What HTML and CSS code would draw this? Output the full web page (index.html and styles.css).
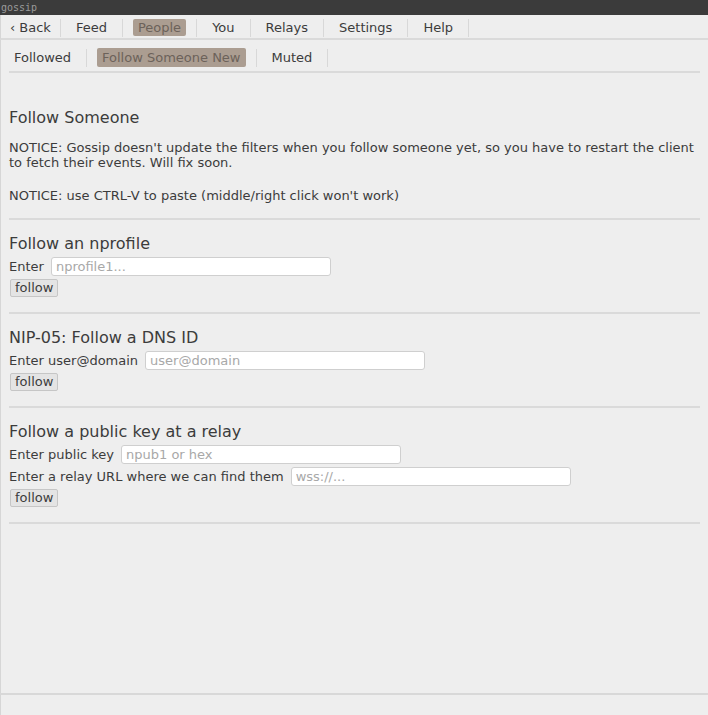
FILE: index.html
```html
<!DOCTYPE html>
<html>
<head>
<meta charset="utf-8">
<link rel="stylesheet" href="styles.css">
</head>
<body>
<div class="app">
  <div class="titlebar">gossip</div>
  <nav class="topnav">
    <span class="nav-item">‹ Back</span><span class="sep first"></span>
    <span class="nav-item">Feed</span><span class="sep"></span>
    <span class="nav-item active">People</span><span class="sep"></span>
    <span class="nav-item">You</span><span class="sep"></span>
    <span class="nav-item">Relays</span><span class="sep"></span>
    <span class="nav-item">Settings</span><span class="sep"></span>
    <span class="nav-item">Help</span><span class="sep"></span>
  </nav>
  <main class="main">
    <nav class="subnav">
      <span class="nav-item">Followed</span><span class="sep"></span>
      <span class="nav-item active">Follow Someone New</span><span class="sep"></span>
      <span class="nav-item">Muted</span><span class="sep"></span>
    </nav>
    <section class="intro">
      <h2 class="heading">Follow Someone</h2>
      <p class="notice">NOTICE: Gossip doesn't update the filters when you follow someone yet, so you have to restart the client to fetch their events. Will fix soon.</p>
      <p class="notice second">NOTICE: use CTRL-V to paste (middle/right click won't work)</p>
    </section>
    <div class="rule"></div>
    <section class="section">
      <h2 class="heading">Follow an nprofile</h2>
      <div class="row"><label class="label">Enter</label><input class="field" placeholder="nprofile1..."></div>
      <button class="btn">follow</button>
    </section>
    <div class="rule"></div>
    <section class="section">
      <h2 class="heading">NIP-05: Follow a DNS ID</h2>
      <div class="row"><label class="label">Enter user@domain</label><input class="field" placeholder="user@domain"></div>
      <button class="btn">follow</button>
    </section>
    <div class="rule"></div>
    <section class="section">
      <h2 class="heading">Follow a public key at a relay</h2>
      <div class="row"><label class="label">Enter public key</label><input class="field" placeholder="npub1 or hex"></div>
      <div class="row"><label class="label">Enter a relay URL where we can find them</label><input class="field" placeholder="wss://..."></div>
      <button class="btn">follow</button>
    </section>
    <div class="rule"></div>
  </main>
  <footer class="footer"></footer>
</div>
</body>
</html>
```
FILE: styles.css
```css
* { box-sizing: border-box; }
html, body { margin: 0; padding: 0; }
body {
  background: #eeeeee;
  font-family: "DejaVu Sans", sans-serif;
  font-size: 13px;
  color: #3c3c3c;
}
.app {
  height: 715px;
  display: flex;
  flex-direction: column;
  overflow: hidden;
}
.titlebar {
  height: 15px;
  line-height: 15px;
  background: #3b3b3b;
  color: #9a9a9a;
  font-family: "DejaVu Sans Mono", monospace;
  font-size: 10px;
  padding-left: 1px;
}
.topnav {
  display: flex;
  align-items: center;
  height: 25px;
  padding: 2px 0 0 4px;
  border-bottom: 2px solid #dadada;
  border-left: 1px solid #d6d6d6;
}
.nav-item {
  padding: 0 5px;
  height: 17px;
  line-height: 17px;
  border-radius: 2px;
  white-space: nowrap;
}
.nav-item.active {
  background: #ab9d91;
  color: #6c625a;
}
.sep {
  width: 1px;
  height: 18px;
  background: #d8d8d8;
  margin: 0 10px 0 10px;
}
.sep.first { margin-left: 4px; }
.main {
  flex: 1;
  padding: 0 8px;
  border-left: 1px solid #d6d6d6;
}
.subnav {
  display: flex;
  align-items: center;
  height: 33px;
  padding-top: 4px;
  border-bottom: 2px solid #dadada;
}
.subnav .nav-item {
  height: 19px;
  line-height: 19px;
}
.heading {
  margin: 0;
  font-size: 16px;
  font-weight: normal;
  line-height: 20px;
  color: #3c3c3c;
}
.intro {
  padding: 35px 0 15px;
}
.intro .heading { margin-bottom: 12px; }
.notice {
  margin: 0;
  line-height: 15px;
}
.notice.second { margin-top: 18px; }
.rule {
  height: 2px;
  background: #dadada;
}
.section {
  padding: 14px 0 15px;
}
.section .heading { margin-bottom: 3px; }
.row {
  display: flex;
  align-items: center;
  gap: 7px;
  height: 19px;
  margin-bottom: 3px;
}
.label { white-space: nowrap; }
.field {
  width: 280px;
  height: 19px;
  border: 1px solid #cfcfcf;
  border-radius: 3px;
  background: #ffffff;
  padding: 0 4px;
  font-family: "DejaVu Sans", sans-serif;
  font-size: 13px;
  color: #3c3c3c;
  outline: none;
}
.field::placeholder { color: #a8a8a8; }
.btn {
  display: block;
  height: 18px;
  margin: 0 0 0 1px;
  padding: 0 4px;
  border: 1px solid #c6c6c6;
  border-radius: 2px;
  background: #e4e4e4;
  font-family: "DejaVu Sans", sans-serif;
  font-size: 13px;
  line-height: 16px;
  color: #3c3c3c;
}
.footer {
  height: 22px;
  border-top: 2px solid #d8d8d8;
  border-left: 1px solid #d6d6d6;
}
```
